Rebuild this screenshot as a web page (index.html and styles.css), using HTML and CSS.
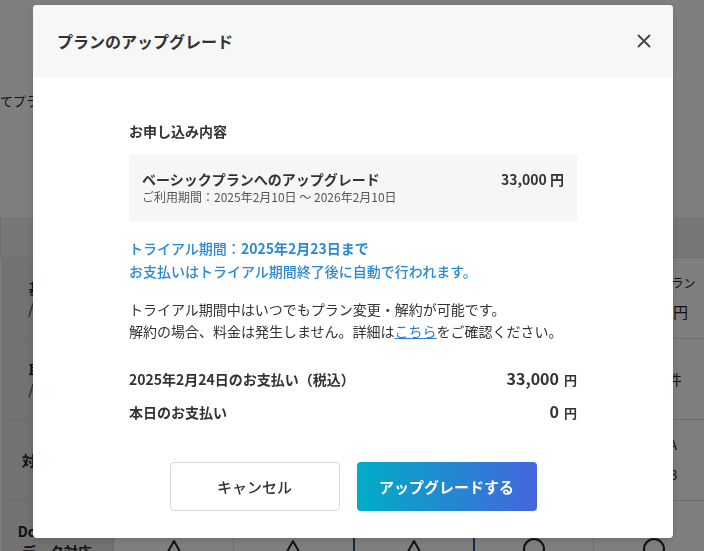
FILE: index.html
```html
<!DOCTYPE html>
<html lang="ja">
<head>
  <meta charset="UTF-8">
  <meta name="viewport" content="width=device-width, initial-scale=1.0">
  <title>プランのアップグレード</title>
  <link rel="stylesheet" href="styles.css">
</head>
<body>
  <div class="page">
    <p class="lead">てプランの機能と料金を比較できます。</p>

    <table class="plans">
      <colgroup>
        <col class="col-label">
        <col><col><col class="col-pick"><col><col>
      </colgroup>
      <thead>
        <tr>
          <th></th>
          <th>フリー</th>
          <th>ライト</th>
          <th class="pick">ベーシック</th>
          <th>プロ</th>
          <th>法人</th>
        </tr>
      </thead>
      <tbody>
        <tr>
          <td class="label">基本料金<span class="sub">/年(税込)</span></td>
          <td><span class="plan-name">フリープラン</span><span class="plan-price">0円</span></td>
          <td><span class="plan-name">ライトプラン</span><span class="plan-price">11,000円</span></td>
          <td class="pick"><span class="plan-name">ベーシックプラン</span><span class="plan-price">33,000円</span></td>
          <td><span class="plan-name">プロプラン</span><span class="plan-price">66,000円</span></td>
          <td><span class="plan-name">ビジネスプラン</span><span class="plan-price">110,000円</span></td>
        </tr>
        <tr>
          <td class="label">取引件数<span class="sub">/月(上限)</span></td>
          <td>50件</td>
          <td>300件</td>
          <td class="pick">1,000件</td>
          <td>3,000件</td>
          <td>10,000件</td>
        </tr>
        <tr>
          <td class="label">対応形式数</td>
          <td class="pair"><span>タイプA</span><span>タイプB</span></td>
          <td class="pair"><span>タイプA</span><span>タイプB</span></td>
          <td class="pick pair"><span>タイプA</span><span>タイプB</span></td>
          <td class="pair"><span>タイプA</span><span>タイプB</span></td>
          <td class="pair"><span>タイプA</span><span>タイプB</span></td>
        </tr>
        <tr>
          <td class="label">DocuWorks<span class="sub-bold">データ対応</span></td>
          <td class="mark"><svg width="22" height="22" viewBox="0 0 22 22"><path d="M11 3 L20 19 H2 Z" fill="none" stroke="#222" stroke-width="2" stroke-linejoin="round"/></svg></td>
          <td class="mark"><svg width="22" height="22" viewBox="0 0 22 22"><path d="M11 3 L20 19 H2 Z" fill="none" stroke="#222" stroke-width="2" stroke-linejoin="round"/></svg></td>
          <td class="mark pick"><svg width="22" height="22" viewBox="0 0 22 22"><path d="M11 3 L20 19 H2 Z" fill="none" stroke="#222" stroke-width="2" stroke-linejoin="round"/></svg></td>
          <td class="mark"><svg width="22" height="22" viewBox="0 0 22 22"><circle cx="11" cy="11" r="10" fill="none" stroke="#222" stroke-width="2"/></svg></td>
          <td class="mark"><svg width="22" height="22" viewBox="0 0 22 22"><circle cx="11" cy="11" r="10" fill="none" stroke="#222" stroke-width="2"/></svg></td>
        </tr>
      </tbody>
    </table>
  </div>

  <div class="overlay">
    <div class="modal">
      <div class="modal-header">
        <h2>プランのアップグレード</h2>
        <button class="close" type="button" aria-label="閉じる">
          <svg width="14" height="14" viewBox="0 0 14 14"><path d="M1.5 1.5 L12.5 12.5 M12.5 1.5 L1.5 12.5" stroke="#444" stroke-width="1.8" stroke-linecap="round"/></svg>
        </button>
      </div>

      <div class="modal-body">
        <h3 class="section-title">お申し込み内容</h3>

        <div class="order">
          <div class="order-row">
            <span class="order-name">ベーシックプランへのアップグレード</span>
            <span class="order-price">33,000 円</span>
          </div>
          <div class="order-period">ご利用期間：2025年2月10日 〜 2026年2月10日</div>
        </div>

        <div class="trial">
          <p>トライアル期間：<strong>2025年2月23日まで</strong></p>
          <p>お支払いはトライアル期間終了後に自動で行われます。</p>
        </div>

        <div class="notes">
          <p>トライアル期間中はいつでもプラン変更・解約が可能です。</p>
          <p>解約の場合、料金は発生しません。詳細は<a href="#">こちら</a>をご確認ください。</p>
        </div>

        <div class="pay-row">
          <span>2025年2月24日のお支払い（税込）</span>
          <span class="amount">33,000<span class="yen">円</span></span>
        </div>
        <div class="pay-row">
          <span>本日のお支払い</span>
          <span class="amount">0<span class="yen">円</span></span>
        </div>

        <div class="actions">
          <button class="btn btn-cancel" type="button">キャンセル</button>
          <button class="btn btn-upgrade" type="button">アップグレードする</button>
        </div>
      </div>
    </div>
  </div>
</body>
</html>
```

FILE: styles.css
```css
html, body {
  overflow: hidden;
}
body {
  margin: 0;
  font-family: "Noto Sans CJK JP", "Noto Sans", sans-serif;
  color: #333;
  background-color: #fff;
}
.page {
  padding-top: 91px;
  width: 713px;
}
.lead {
  margin: 0 0 106px 0;
  font-size: 13px;
  line-height: 20px;
  color: #222;
}
.plans {
  width: 713px;
  border-collapse: collapse;
  table-layout: fixed;
}
.plans col {
  width: 120px;
}
.plans .col-label {
  width: 113px;
}
.plans th, .plans td {
  border: 1px solid #dcdcdc;
  padding: 0;
  text-align: center;
  font-size: 14px;
  color: #222;
}
.plans th {
  height: 40px;
  background-color: #eeeeee;
  font-weight: bold;
  border-top: none;
}
.plans tbody tr {
  height: 81px;
}
.plans .pick {
  border-left: 2px solid #1a56a0;
  border-right: 2px solid #1a56a0;
}
.plans td.label {
  background-color: #e4e4e4;
  font-weight: bold;
  line-height: 20px;
  border-left: none;
}
.plans .sub {
  display: block;
  font-weight: normal;
}
.plans .sub-bold {
  display: block;
}
.plan-name {
  display: block;
  font-size: 12px;
  line-height: 20px;
}
.plan-price {
  display: block;
  margin-top: 8px;
  font-size: 15px;
  line-height: 22px;
}
.plans td.pair span {
  display: block;
  font-size: 13px;
  line-height: 20px;
  margin: 10px 0;
}
.plans td.mark {
  vertical-align: top;
  padding-top: 37px;
}
.plans td.mark svg {
  display: block;
  margin: 0 auto;
}

/* modal */
.overlay {
  position: fixed;
  top: 0;
  left: 0;
  right: 0;
  bottom: 0;
  background-color: rgba(0, 0, 0, 0.5);
  display: flex;
  justify-content: center;
  align-items: flex-start;
  padding: 5px 0 0 2px;
}
.modal {
  width: 640px;
  background-color: #fff;
  border-radius: 4px;
  overflow: hidden;
  box-shadow: 0 2px 8px rgba(0, 0, 0, 0.15);
}
.modal-header {
  height: 72px;
  background-color: #f7f7f7;
  display: flex;
  align-items: center;
  justify-content: space-between;
  padding: 0 22px 0 24px;
}
.modal-header h2 {
  margin: 0;
  font-size: 16px;
  font-weight: bold;
  line-height: 24px;
  color: #333;
}
.close {
  border: none;
  background: none;
  padding: 0;
  width: 14px;
  height: 14px;
  cursor: pointer;
}
.close svg {
  display: block;
}
.modal-body {
  padding: 44px 96px 27px 96px;
}
.section-title {
  margin: 0 0 14px 0;
  font-size: 14px;
  font-weight: bold;
  line-height: 20px;
}
.order {
  background-color: #f6f6f6;
  padding: 14px 13px 16px 13px;
}
.order-row {
  display: flex;
  justify-content: space-between;
  font-size: 14px;
  font-weight: bold;
  line-height: 20px;
}
.order-period {
  font-size: 12px;
  line-height: 16px;
  color: #555;
}
.trial {
  margin-top: 16px;
  color: #2a89d6;
  font-size: 14px;
  font-weight: 500;
  line-height: 23px;
}
.trial p, .notes p {
  margin: 0;
}
.trial strong {
  font-weight: bold;
}
.notes {
  margin-top: 15px;
  font-size: 14px;
  line-height: 22px;
  color: #333;
}
.notes a {
  color: #2a7fd0;
  text-decoration: underline;
}
.pay-row {
  display: flex;
  justify-content: space-between;
  align-items: center;
  height: 22px;
  font-size: 14px;
  font-weight: bold;
  line-height: 22px;
  margin-top: 11px;
}
.notes + .pay-row {
  margin-top: 26px;
}
.amount {
  font-size: 16px;
  line-height: 22px;
}
.yen {
  font-size: 13px;
  margin-left: 5px;
}
.actions {
  margin-top: 39px;
  display: flex;
  justify-content: center;
  gap: 17px;
}
.btn {
  height: 49px;
  border-radius: 4px;
  font-family: inherit;
  font-size: 15px;
  cursor: pointer;
}
.btn-cancel {
  width: 170px;
  background-color: #fff;
  border: 1px solid #d4d7e0;
  color: #333;
  font-weight: 500;
}
.btn-upgrade {
  width: 180px;
  border: none;
  color: #fff;
  font-weight: bold;
  background: linear-gradient(90deg, #00adc4, #4466dd);
}
```
